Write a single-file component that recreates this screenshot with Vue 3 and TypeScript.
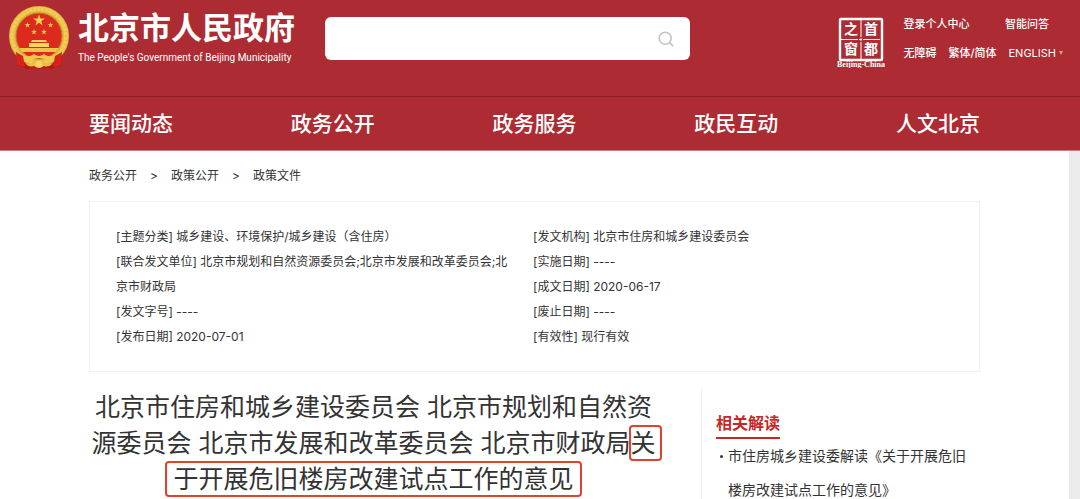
<script setup lang="ts">
import { ref } from 'vue'

interface MetaItem {
  label: string
  value: string
}

const keyword = ref('')

const navItems: string[] = ['要闻动态', '政务公开', '政务服务', '政民互动', '人文北京']
const crumbs: string[] = ['政务公开', '政策公开', '政策文件']

const metaLeft: MetaItem[] = [
  { label: '主题分类', value: '城乡建设、环境保护/城乡建设（含住房）' },
  { label: '联合发文单位', value: '北京市规划和自然资源委员会;北京市发展和改革委员会;北京市财政局' },
  { label: '发文字号', value: '----' },
  { label: '发布日期', value: '2020-07-01' },
]

const metaRight: MetaItem[] = [
  { label: '发文机构', value: '北京市住房和城乡建设委员会' },
  { label: '实施日期', value: '----' },
  { label: '成文日期', value: '2020-06-17' },
  { label: '废止日期', value: '----' },
  { label: '有效性', value: '现行有效' },
]

const star = 'M0 -10 L2.3 -3.1 L9.5 -3.1 L3.7 1.2 L5.9 8.1 L0 3.8 L-5.9 8.1 L-3.7 1.2 L-9.5 -3.1 L-2.3 -3.1 Z'
</script>

<template>
  <div class="page">
    <header class="header">
      <div class="top">
        <a class="brand" href="#">
          <svg class="emblem" viewBox="0 0 60 64" aria-hidden="true">
            <path d="M7 42 L8 60 Q12 59 17 63 Q24 61 30 63 Q36 61 43 63 Q48 59 52 60 L53 42 Z" fill="#b9150f" />
            <circle cx="30" cy="30" r="26.5" fill="none" stroke="#e3b43a" stroke-width="7" />
            <circle cx="30" cy="30" r="27" fill="none" stroke="#f0cc58" stroke-width="4" />
            <circle cx="30" cy="30" r="27" fill="none" stroke="#e8bd48" stroke-width="3" stroke-dasharray="1 3" />
            <circle cx="30" cy="30" r="23" fill="#dc2a1e" stroke="#b98a2c" stroke-width="1" />
            <path :d="star" transform="translate(30 14.5) scale(.62)" fill="#f5ce4c" />
            <path :d="star" transform="translate(18.5 19) scale(.3)" fill="#f5ce4c" />
            <path :d="star" transform="translate(41.5 19) scale(.3)" fill="#f5ce4c" />
            <path :d="star" transform="translate(25 26) scale(.3)" fill="#f5ce4c" />
            <path :d="star" transform="translate(35 26) scale(.3)" fill="#f5ce4c" />
            <path d="M23 34 H37 L38 36 H22 Z M20 37 H40 V41 H20 Z" fill="#f7d45a" />
            <path d="M10 42 H50 L47 46 H13 Z" fill="#efc34a" />
            <path d="M7 46 L14 50 L16 61 L8 59 Z M53 46 L46 50 L44 61 L52 59 Z" fill="#d8231a" />
            <path d="M14 49 Q20 52 25 48 Q30 52 35 48 Q40 52 46 49 Q44 56 37 54 Q30 50 23 54 Q16 56 14 49 Z" fill="#f0c84e" />
            <path d="M16 57 Q21 59 25 56 Q30 52 35 56 Q39 59 44 57 Q40 62 35 60 Q30 64 25 60 Q20 62 16 57 Z" fill="#eebd3f" />
            <circle cx="30" cy="58" r="3.5" fill="#f5d467" />
          </svg>
          <span class="brand-text">
            <span class="brand-name">北京市人民政府</span>
            <span class="brand-sub">The People's Government of Beijing Municipality</span>
          </span>
        </a>

        <form class="search" role="search" @submit.prevent>
          <input v-model="keyword" class="search-input" type="text" aria-label="搜索" />
          <button class="search-button" type="submit" aria-label="搜索">
            <svg viewBox="0 0 16 16" width="16" height="16" fill="none" stroke="#c4c4c4" stroke-width="1.6" stroke-linecap="round">
              <circle cx="7.2" cy="7.2" r="6" />
              <path d="M11.6 11.6 L14.6 14.6" />
            </svg>
          </button>
        </form>

        <div class="tools">
          <a class="seal" href="#" aria-label="首都之窗">
            <svg viewBox="0 0 48 52" width="48" height="52" fill="#fff">
              <rect x="3" y="3" width="42" height="41" rx="1" fill="none" stroke="#fff" stroke-width="2.4" />
              <path d="M24 4 V43 M4 23.5 H44" stroke="#fff" stroke-width="1" stroke-dasharray="17 1 3 1" />
              <g class="seal-glyph" text-anchor="middle">
                <text x="14" y="18">之</text>
                <text x="34" y="18">首</text>
                <text x="14" y="38">窗</text>
                <text x="34" y="38">都</text>
              </g>
              <text class="seal-caption" x="24" y="51" text-anchor="middle">Beijing-China</text>
            </svg>
          </a>
          <div class="links">
            <div class="link-row">
              <a href="#">登录个人中心</a>
              <a href="#">智能问答</a>
            </div>
            <div class="link-row">
              <a href="#">无障碍</a>
              <a href="#">繁体/简体</a>
              <a class="english" href="#">ENGLISH<span class="caret"></span></a>
            </div>
          </div>
        </div>
      </div>
      <nav class="nav">
        <div class="nav-inner">
          <a v-for="item in navItems" :key="item" href="#">{{ item }}</a>
        </div>
      </nav>
    </header>

    <div class="body">
      <main class="content">
        <div class="crumbs">
          <template v-for="(crumb, i) in crumbs" :key="crumb">
            <span v-if="i > 0" class="sep">&gt;</span>
            <a href="#">{{ crumb }}</a>
          </template>
        </div>

        <section class="meta">
          <ul>
            <li v-for="m in metaLeft" :key="m.label">[{{ m.label }}] {{ m.value }}</li>
          </ul>
          <ul>
            <li v-for="m in metaRight" :key="m.label">[{{ m.label }}] {{ m.value }}</li>
          </ul>
        </section>

        <div class="columns">
          <h1 class="title">北京市住房和城乡建设委员会 北京市规划和自然资源委员会 北京市发展和改革委员会 北京市财政局<span class="mark mark-short">关</span><span class="mark mark-long">于开展危旧楼房改建试点工作的意见</span></h1>
          <aside class="related">
            <h2>相关解读</h2>
            <ul>
              <li><a href="#">市住房城乡建设委解读《关于开展危旧楼房改建试点工作的意见》</a></li>
            </ul>
          </aside>
        </div>
      </main>
      <div class="gutter"></div>
    </div>
  </div>
</template>

<style>
body {
  margin: 0;
  background: #fff;
}
</style>

<style scoped>
.page {
  min-height: 100vh;
  display: flex;
  flex-direction: column;
  color: #333;
  font-family: Inter, "Noto Sans CJK SC", sans-serif;
  font-size: 12px;
}

a {
  color: inherit;
  text-decoration: none;
}

ul {
  list-style: none;
  margin: 0;
  padding: 0;
}

.header {
  background: #ad2c33;
  color: #fff;
  border-bottom: 1px solid #cf7b80;
}

.top {
  display: flex;
  align-items: flex-start;
  height: 96px;
  padding: 0 17px 0 9px;
  box-sizing: border-box;
}

.brand {
  display: flex;
  gap: 9px;
  padding-top: 6px;
}

.emblem {
  width: 60px;
  height: 64px;
}

.brand-text {
  display: flex;
  flex-direction: column;
  width: 220px;
  white-space: nowrap;
}

.brand-name {
  font-size: 31px;
  font-weight: 700;
  line-height: 44px;
}

.brand-sub {
  font-family: Roboto, "Noto Sans", sans-serif;
  font-size: 10px;
  line-height: 16px;
}

.search {
  display: flex;
  flex: 0 1 365px;
  height: 43px;
  margin: 17px 0 0 27px;
  background: #fff;
  border-radius: 6px;
}

.search-input {
  flex: 1;
  min-width: 0;
  padding: 0 14px;
  border: 0;
  background: transparent;
  outline: none;
  font: inherit;
  font-size: 14px;
}

.search-button {
  display: flex;
  align-items: center;
  padding: 0 16px;
  border: 0;
  background: transparent;
}

.tools {
  display: flex;
  gap: 18px;
  margin-left: auto;
  padding-top: 16px;
}

.seal-glyph {
  font-family: "Noto Sans CJK SC", sans-serif;
  font-size: 14px;
  font-weight: 700;
}

.seal-caption {
  font-family: "Liberation Serif", serif;
  font-size: 8px;
  font-weight: 700;
}

.links {
  display: flex;
  flex-direction: column;
  gap: 13px;
  font-size: 11px;
  font-weight: 500;
  line-height: 16px;
  white-space: nowrap;
}

.link-row {
  display: flex;
  justify-content: space-between;
  gap: 12px;
}

.link-row:first-child {
  padding-right: 14px;
}

.english {
  display: flex;
  align-items: center;
  gap: 3px;
  font-weight: 400;
}

.caret {
  border: 2px solid transparent;
  border-top: 4px solid #d0a878;
  border-bottom: 0;
}

.nav {
  border-top: 1px solid #8c2026;
  padding-right: 11px;
}

.nav-inner {
  display: flex;
  justify-content: space-between;
  max-width: 891px;
  margin: 0 auto;
  font-size: 21px;
  font-weight: 500;
  line-height: 53px;
}

.body {
  display: flex;
  flex: 1;
}

.gutter {
  flex: 0 0 11px;
  background: #ebebeb;
}

.content {
  flex: 0 1 891px;
  margin: 0 auto;
}

.crumbs {
  display: flex;
  padding: 12px 0 13px;
  line-height: 25px;
}

.sep {
  width: 34px;
  text-align: center;
}

.meta {
  display: grid;
  grid-template-columns: 397px 1fr;
  gap: 20px;
  padding: 22px 26px;
  border: 1px solid #f0f0ea;
  line-height: 25px;
}

.columns {
  display: flex;
  justify-content: space-between;
  margin-top: 17px;
}

.title {
  flex: 0 1 569px;
  margin: 0;
  font-size: 25px;
  font-weight: 400;
  line-height: 36px;
  text-align: center;
}

.mark {
  position: relative;
  display: inline-block;
}

.mark::after {
  content: "";
  position: absolute;
  inset: 0 -8px;
  border: 2px solid #e0422c;
  border-radius: 4px;
}

.mark-short::after {
  inset: 0 -6px 0 -2px;
}

.related {
  flex: 0 1 279px;
  box-sizing: border-box;
  padding: 20px 9px 0 14px;
  border-left: 1px solid #eee;
}

.related h2 {
  width: fit-content;
  margin: 0;
  border-bottom: 2px solid #c62828;
  color: #c62828;
  font-size: 16px;
  font-weight: 700;
  line-height: 28px;
}

.related ul {
  font-size: 14px;
  line-height: 34px;
}

.related li {
  position: relative;
  padding-left: 12px;
}

.related li::before {
  content: "";
  position: absolute;
  left: 4px;
  top: 16px;
  width: 3px;
  height: 3px;
  border-radius: 50%;
  background: #333;
}
</style>
